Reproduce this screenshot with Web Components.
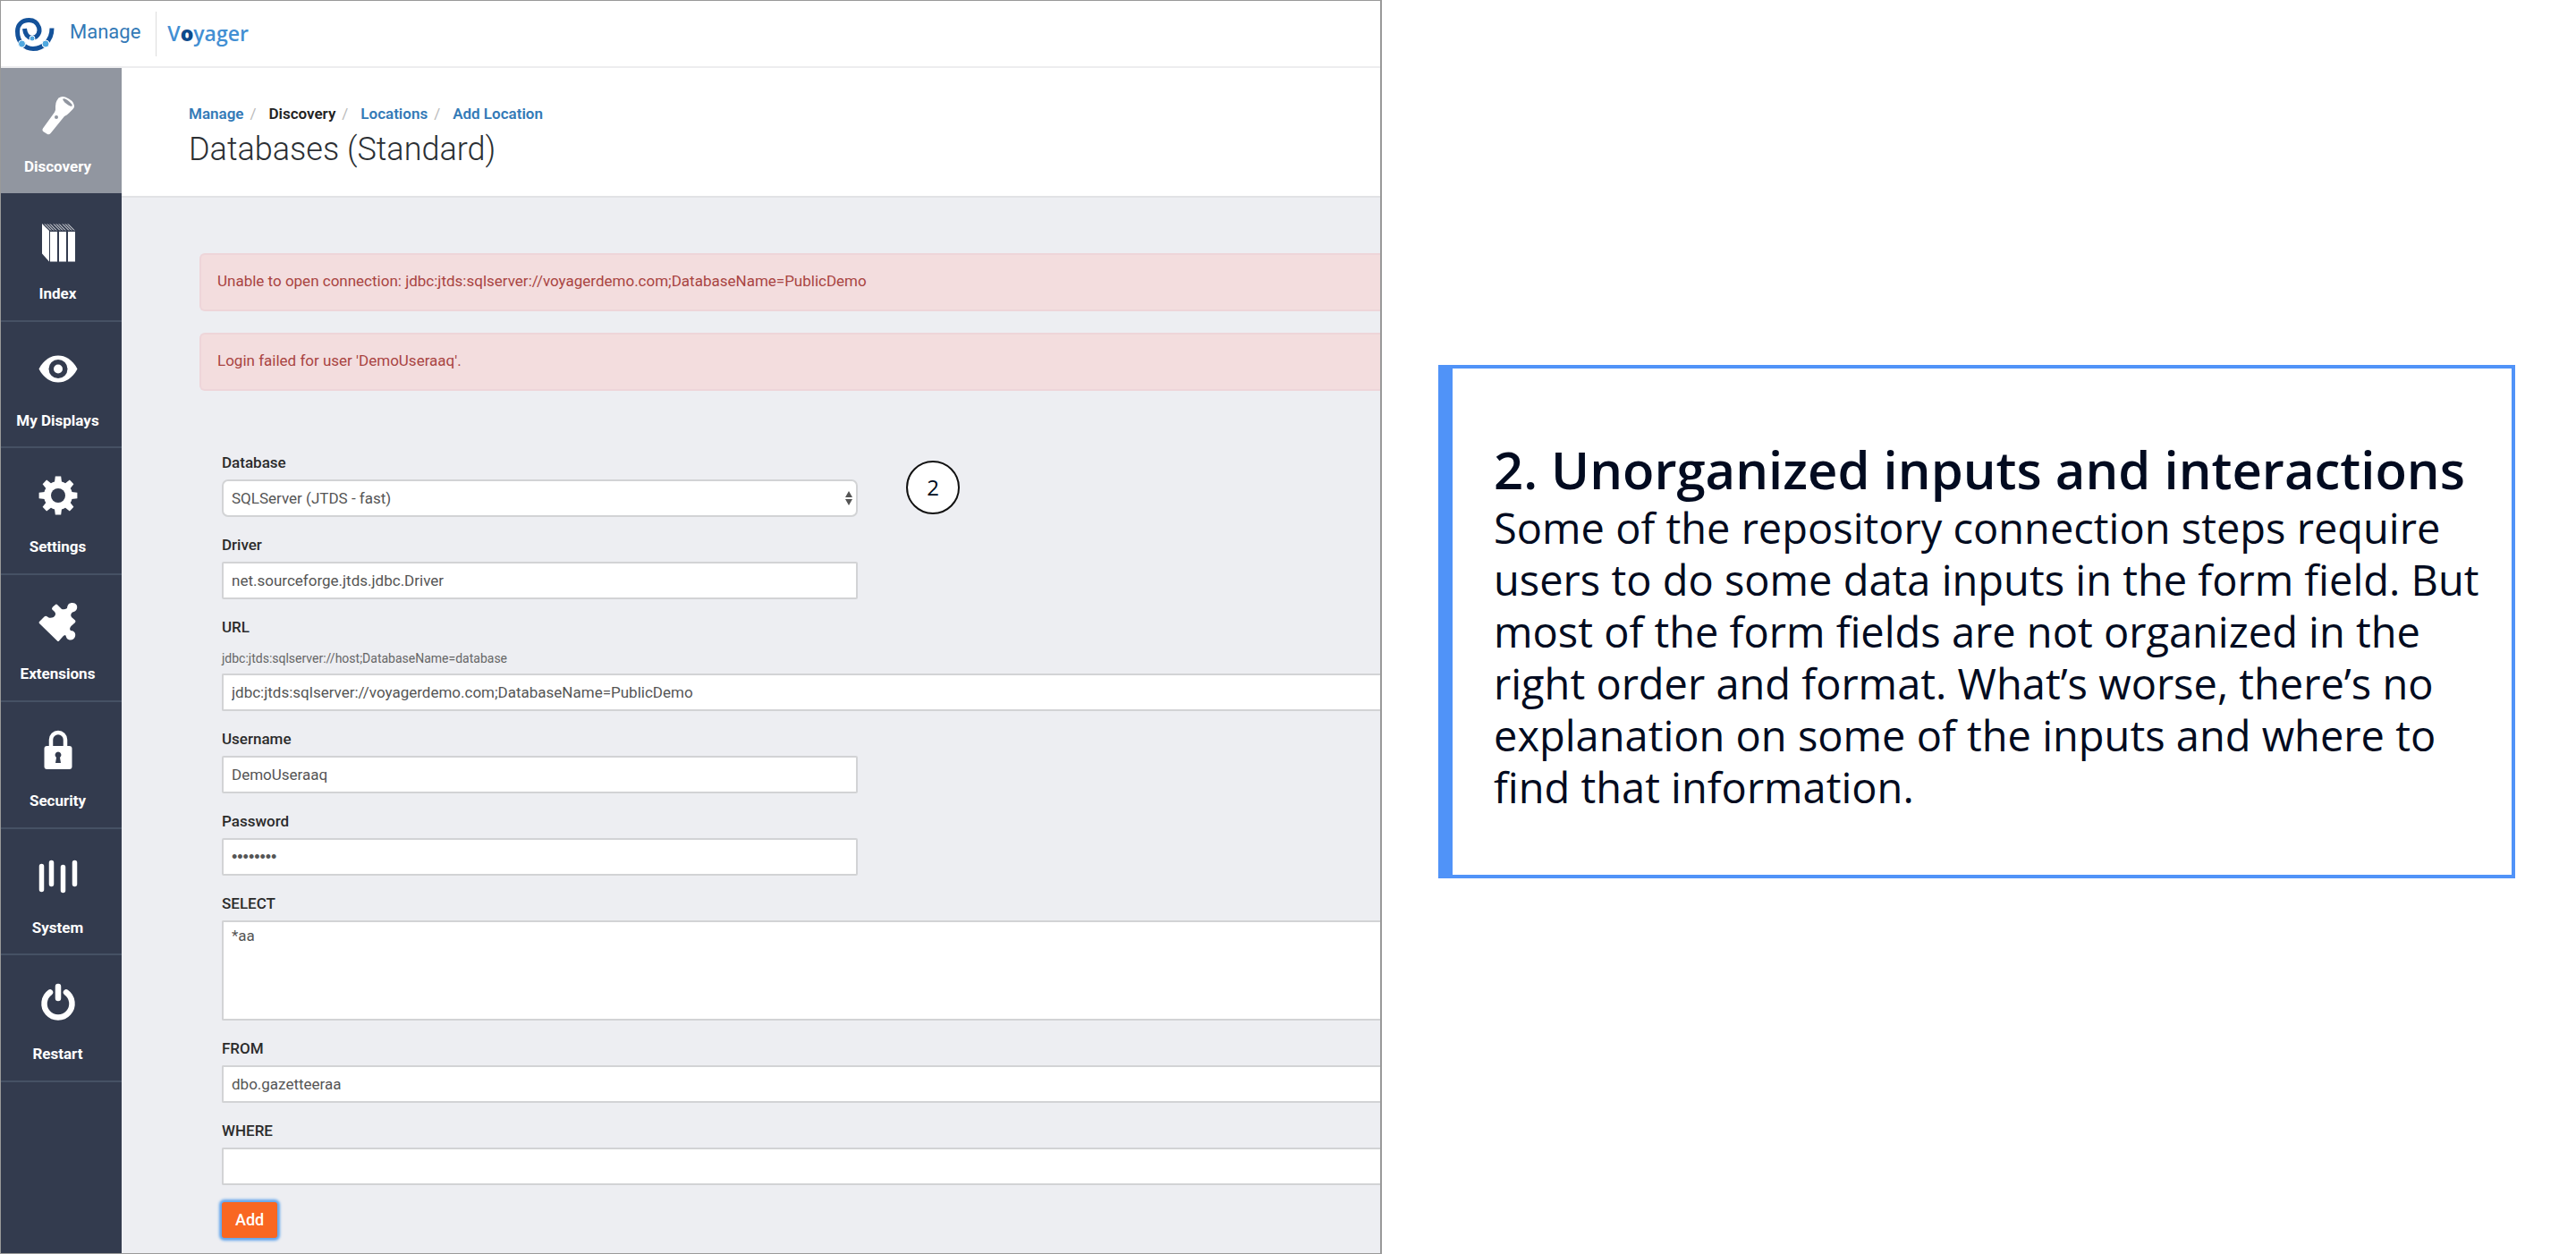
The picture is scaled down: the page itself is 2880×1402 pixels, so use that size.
<!DOCTYPE html>
<html lang="en">
<head>
<meta charset="utf-8">
<title>Voyager Manage – Databases (Standard)</title>
<style>
  html, body { margin: 0; min-height: 100%; background: #fff; }
  body { font-family: Roboto, "Liberation Sans", sans-serif; font-size: 17px; line-height: 24px; color: #333; }
</style>
</head>
<body>
<case-slide>
  <voyager-app slot="shot">
    <app-header slot="header"></app-header>
    <side-nav slot="nav">
      <nav-item icon="torch" active>Discovery</nav-item>
      <nav-item icon="books">Index</nav-item>
      <nav-item icon="eye">My Displays</nav-item>
      <nav-item icon="gear">Settings</nav-item>
      <nav-item icon="puzzle">Extensions</nav-item>
      <nav-item icon="lock">Security</nav-item>
      <nav-item icon="bars">System</nav-item>
      <nav-item icon="power">Restart</nav-item>
    </side-nav>
    <page-title slot="title">Databases (Standard)</page-title>
    <alert-box>Unable to open connection: jdbc:jtds:sqlserver://voyagerdemo.com;DatabaseName=PublicDemo</alert-box>
    <alert-box>Login failed for user 'DemoUseraaq'.</alert-box>
    <location-form>
      <form-field kind="select" label="Database" value="SQLServer (JTDS - fast)"><step-badge>2</step-badge></form-field>
      <form-field label="Driver" value="net.sourceforge.jtds.jdbc.Driver"></form-field>
      <form-field wide label="URL" hint="jdbc:jtds:sqlserver://host;DatabaseName=database" value="jdbc:jtds:sqlserver://voyagerdemo.com;DatabaseName=PublicDemo"></form-field>
      <form-field label="Username" value="DemoUseraaq"></form-field>
      <form-field kind="password" label="Password" value="password"></form-field>
      <form-field wide kind="textarea" label="SELECT" value="*aa"></form-field>
      <form-field wide label="FROM" value="dbo.gazetteeraa"></form-field>
      <form-field wide label="WHERE" value=""></form-field>
    </location-form>
  </voyager-app>
  <note-card slot="note">
    <span slot="heading">2. Unorganized inputs and interactions</span>
    Some of the repository connection steps require users to do some data inputs in the form field. But most of the form fields are not organized in the right order and format. What’s worse, there’s no explanation on some of the inputs and where to find that information.
  </note-card>
</case-slide>

<script>
const define = (name, render) => customElements.define(name, class extends HTMLElement {
  connectedCallback() {
    if (this.shadowRoot) return;
    const root = this.attachShadow({ mode: 'open' });
    root.innerHTML = '<style>*{box-sizing:border-box}:host{display:block;box-sizing:border-box}</style>' + render(this);
  }
});

/* Sidebar icons, all on a 46 x 46 grid */
const gearTeeth = [0, 45, 90, 135, 180, 225, 270, 315]
  .map(a => `<path d="M19 8 19.8 1.6H26.2L27 8Z" transform="rotate(${a} 23 23)"/>`).join('');
const icons = {
  torch: `<path d="M23.5 3.5Q27 1 31 2.5Q40 6 41 12Q41.5 14 39.5 16L35 20.5Q33 22.5 30 24L15 42.5Q13.500 45 11 44L7 41.5Q4.5 40 6 37.5L19 19.5Q20.500 17 20 13Q20 9 21.500 6.500Z"/>
    <ellipse cx="33.500" cy="8.500" rx="6.500" ry="2" transform="rotate(38 33.500 8.500)" fill="var(--hole)"/><circle cx="21" cy="25" r="2" fill="var(--hole)"/>`,
  books: `<path d="M5 2 13 10V44.500L5 35.500ZM14 11H22V44.500H14ZM24 11H32V44.500H24ZM34 11H42V44.500H34Z"/>
    <path d="M8 2.500 15 9.500M11 2.500 18 9.500M14 2.500 21 9.500M18 2.500 25 9.500M21 2.500 28 9.500M24 2.500 31 9.500M28 2.500 35 9.500M31 2.500 38 9.500M34 2.500 41 9.500" fill="none" stroke="#fff" stroke-width="1"/>`,
  eye: `<path d="M1.500 22.500C7 12 15 7.500 23 7.500S39 12 44.500 22.500C39 33 31 37.500 23 37.500S7 33 1.500 22.500Z"/><circle cx="23" cy="22.500" r="10.500" fill="var(--hole)"/><circle cx="23" cy="22.500" r="5"/>`,
  gear: `<circle cx="23" cy="23" r="16"/>${gearTeeth}<circle cx="23" cy="23" r="8" fill="var(--hole)"/>`,
  puzzle: `<path d="M2 22 7 17Q9 15 11 16.500C13 19 19 18 20 14C20.500 11 17 9.500 16 8Q16 6.500 17 5.500L20 3Q21 2 22.500 3.500L27 8Q30 9 33 7C33.500 3 35 1 39 1C43 1 45 4 44 7.500C43.500 10 41 11 39 11.500Q36 14 38 17L42 20.500Q43 21.500 42 23L37.500 27Q35 30 37 32C41 32 43 35 42 38.500C41 42 37.500 43.500 34.500 42C32 41 32 38 31 37Q29 37 27.500 39.500L24 43.500Q23 44.500 22 43.500L2 24Q1 23 2 22Z"/>`,
  lock: `<rect x="7.500" y="19" width="31" height="26" rx="3"/><path d="M15 21V12a8 8 0 0 1 16 0V21" fill="none" stroke="#fff" stroke-width="4.500"/><path d="M23 25.500a3.600 3.600 0 0 1 2 6.500l1 6h-6l1-6a3.600 3.600 0 0 1 2-6.500Z" fill="var(--hole)"/>`,
  bars: `<path d="M4.500 11.500V37.500M15.500 7.500V31.500M28.500 12.500V38.500M41.500 7.500V31.500" fill="none" stroke="#fff" stroke-width="5.500" stroke-linecap="round"/>`,
  power: `<path d="M14 11.500A15.500 15.500 0 1 0 32 11.500M23 5V18" fill="none" stroke="#fff" stroke-width="6.500" stroke-linecap="round"/>`
};

define('case-slide', () => `
  <style>
    :host { display: grid; grid-template-columns: 1545fr 1335fr; min-height: 100vh; }
    .note { padding: 408px 68px 0 63px; }
  </style>
  <slot name="shot"></slot>
  <div class="note"><slot name="note"></slot></div>`);

define('voyager-app', () => `
  <style>
    :host { display: grid; grid-template-columns: 135px minmax(0, 1fr); grid-template-rows: auto 1fr; background: #edeef2;
      border: 1px solid #999; border-right-width: 2px; overflow: hidden; }
    .top { grid-column: 1 / -1; }
    .nav { background: #333b4e; }
    .content { display: flex; flex-direction: column; gap: 24px; padding: 62px 0 17px 87px; }
  </style>
  <div class="top"><slot name="header"></slot></div>
  <div class="nav"><slot name="nav"></slot></div>
  <main><slot name="title"></slot><div class="content"><slot></slot></div></main>`);

define('app-header', () => `
  <style>
    header { display: flex; align-items: center; height: 75px; padding-left: 15px; background: #fff; border-bottom: 2px solid #ededef; }
    a { text-decoration: none; color: #337ab7; }
    .home { display: flex; align-items: center; gap: 16px; font-size: 22px; line-height: 28px; }
    .home span { padding-bottom: 4px; }
    .rule { width: 1px; height: 50px; background: #ddd; margin: 0 12px 0 17px; }
    .brand { padding-bottom: 2px; font: 600 23px/28px "Open Sans", sans-serif; color: #428fd3; }
    .brand b { color: #0c4a8c; font-weight: 800; }
  </style>
  <header>
    <a class="home" href="#"><svg width="46" height="40" viewBox="0 0 46 40" fill="none" stroke="#14529a" stroke-width="5" aria-hidden="true">
      <path d="M11.500 14C12 20 15 24 20 24.500C27 24 29 17 27.500 12.500C25.500 7 21 4.500 16.500 4.500C8 4.500 3.500 10 3.500 17C3.500 24 5.500 28 8.500 31C13 35.500 17 36.500 21 36.500C27 36.500 32 34 35 30.500C39 27 42 21 42 13.500"/>
      <g fill="#4fa8e0" stroke="#fff" stroke-width="1"><circle cx="20" cy="25" r="3"/><circle cx="8.500" cy="31" r="4"/><circle cx="35" cy="31" r="4"/></g>
    </svg><span>Manage</span></a>
    <div class="rule"></div>
    <a class="brand" href="#">V<b>o</b>yager</a>
  </header>`);

define('side-nav', () => `
  <style>nav { display: grid; grid-template-rows: repeat(8, 1fr); height: 1134px; }</style>
  <nav aria-label="Main"><slot></slot></nav>`);

define('nav-item', el => `
  <style>
    :host { --hole: #333b4e; background: var(--hole); border-bottom: 2px solid #465164; }
    :host([active]) { --hole: #9196a0; border-bottom-color: #333b4e; }
    a { display: flex; flex-direction: column; align-items: center; gap: 22px; padding: 30px 8px 0 0;
      color: #fff; font-weight: 700; text-decoration: none; white-space: nowrap; }
  </style>
  <a href="#"><svg width="46" height="46" viewBox="0 0 46 46" fill="#fff" aria-hidden="true">${icons[el.getAttribute('icon')]}</svg><span><slot></slot></span></a>`);

define('page-title', () => `
  <style>
    header { background: #fff; border-bottom: 2px solid #e1e2e5; padding: 39px 0 30px 75px; }
    ol { display: flex; gap: 14px; list-style: none; margin: 0; padding: 0; font-weight: 600; }
    li { display: flex; gap: 7px; color: #222; }
    li:not(:last-child)::after { content: "/"; color: #bbb; font-weight: 400; }
    a { color: #337ab7; text-decoration: none; }
    h1 { margin: 6px 0 0; font-size: 36px; line-height: 44px; font-weight: 300; color: #2b2f33; }
  </style>
  <header>
    <nav aria-label="Breadcrumb"><ol><li><a href="#">Manage</a></li><li>Discovery</li><li><a href="#">Locations</a></li><li><a href="#">Add Location</a></li></ol></nav>
    <h1><slot></slot></h1>
  </header>`);

define('alert-box', () => `
  <style>div { padding: 16px 20px 19px 18px; border: 2px solid #eed5d9; border-right: 0; border-radius: 6px 0 0 6px; background: #f3ddde; color: #a94442; line-height: 26px; }</style>
  <div role="alert"><slot></slot></div>`);

define('location-form', () => `
  <style>
    :host { padding: 44px 0 0 25px; }
    form { display: flex; flex-direction: column; align-items: flex-start; gap: 19px; }
    button { height: 40px; padding: 0 15px; font: 500 18px/24px Roboto, sans-serif; color: #fff; background: #f96722; border: 0; border-radius: 3px; box-shadow: 0 0 3px 3px #63a5ec; }
  </style>
  <form><slot></slot><button type="button">Add</button></form>`);

define('form-field', el => {
  const kind = el.getAttribute('kind'), value = el.getAttribute('value'), hint = el.getAttribute('hint');
  const control = kind === 'select' ? `<div class="pick"><select id="c"><option>${value}</option></select>
      <svg width="8" height="16" viewBox="0 0 8 16" fill="#555" aria-hidden="true"><path d="M4 0 8 7H0ZM4 16 0 9H8Z"/></svg></div>`
    : kind === 'textarea' ? `<textarea id="c">${value}</textarea>`
    : `<input id="c" type="${kind || 'text'}" value="${value}">`;
  return `
  <style>
    :host { position: relative; width: 711px; }
    :host([wide]) { width: 100%; }
    label { display: block; margin-bottom: 7px; font-weight: 500; color: #2b2b2b; }
    p { margin: 13px 0 7px; font-size: 14px; line-height: 20px; color: #666; }
    input, select, textarea { display: block; width: 100%; height: 42px; margin: 0; padding: 0 9px; border: 2px solid #d2d3d5; border-radius: 2px;
      background: #fff; color: #555; font: 17px/24px Roboto, sans-serif; outline: 0; }
    :host([wide]) :is(input, textarea) { border-right: 0; border-radius: 2px 0 0 2px; }
    textarea { height: 112px; padding-top: 3px; resize: none; }
    select { appearance: none; border-radius: 7px; }
    input[type=password] { font-family: "Liberation Sans", sans-serif; font-size: 18px; }
    .pick { display: grid; align-items: center; }
    .pick > * { grid-area: 1 / 1; }
    .pick svg { justify-self: end; margin-right: 6px; pointer-events: none; }
  </style>
  <label for="c">${el.getAttribute('label')}</label>${hint ? `<p>${hint}</p>` : ''}${control}<slot></slot>`;
});

define('step-badge', () => `
  <style>
    :host { position: absolute; left: calc(100% + 54px); top: 10px; width: 60px; height: 60px; border: 2px solid #111; border-radius: 50%;
      background: #fff; color: #000b20; display: grid; place-items: center; font: 500 24px/32px "Open Sans", sans-serif; }
  </style>
  <span><slot></slot></span>`);

define('note-card', () => `
  <style>
    section { border: 4px solid #5093f8; border-left-width: 16px; padding: 76px 30px 69px 46px; color: #020b20; font-family: "Open Sans", sans-serif; background: #fff; }
    h2 { margin: 0; font-size: 58px; line-height: 73px; font-weight: 600; }
    p { margin: 0; font-size: 47px; line-height: 58px; }
  </style>
  <section><h2><slot name="heading"></slot></h2><p><slot></slot></p></section>`);
</script>
</body>
</html>
